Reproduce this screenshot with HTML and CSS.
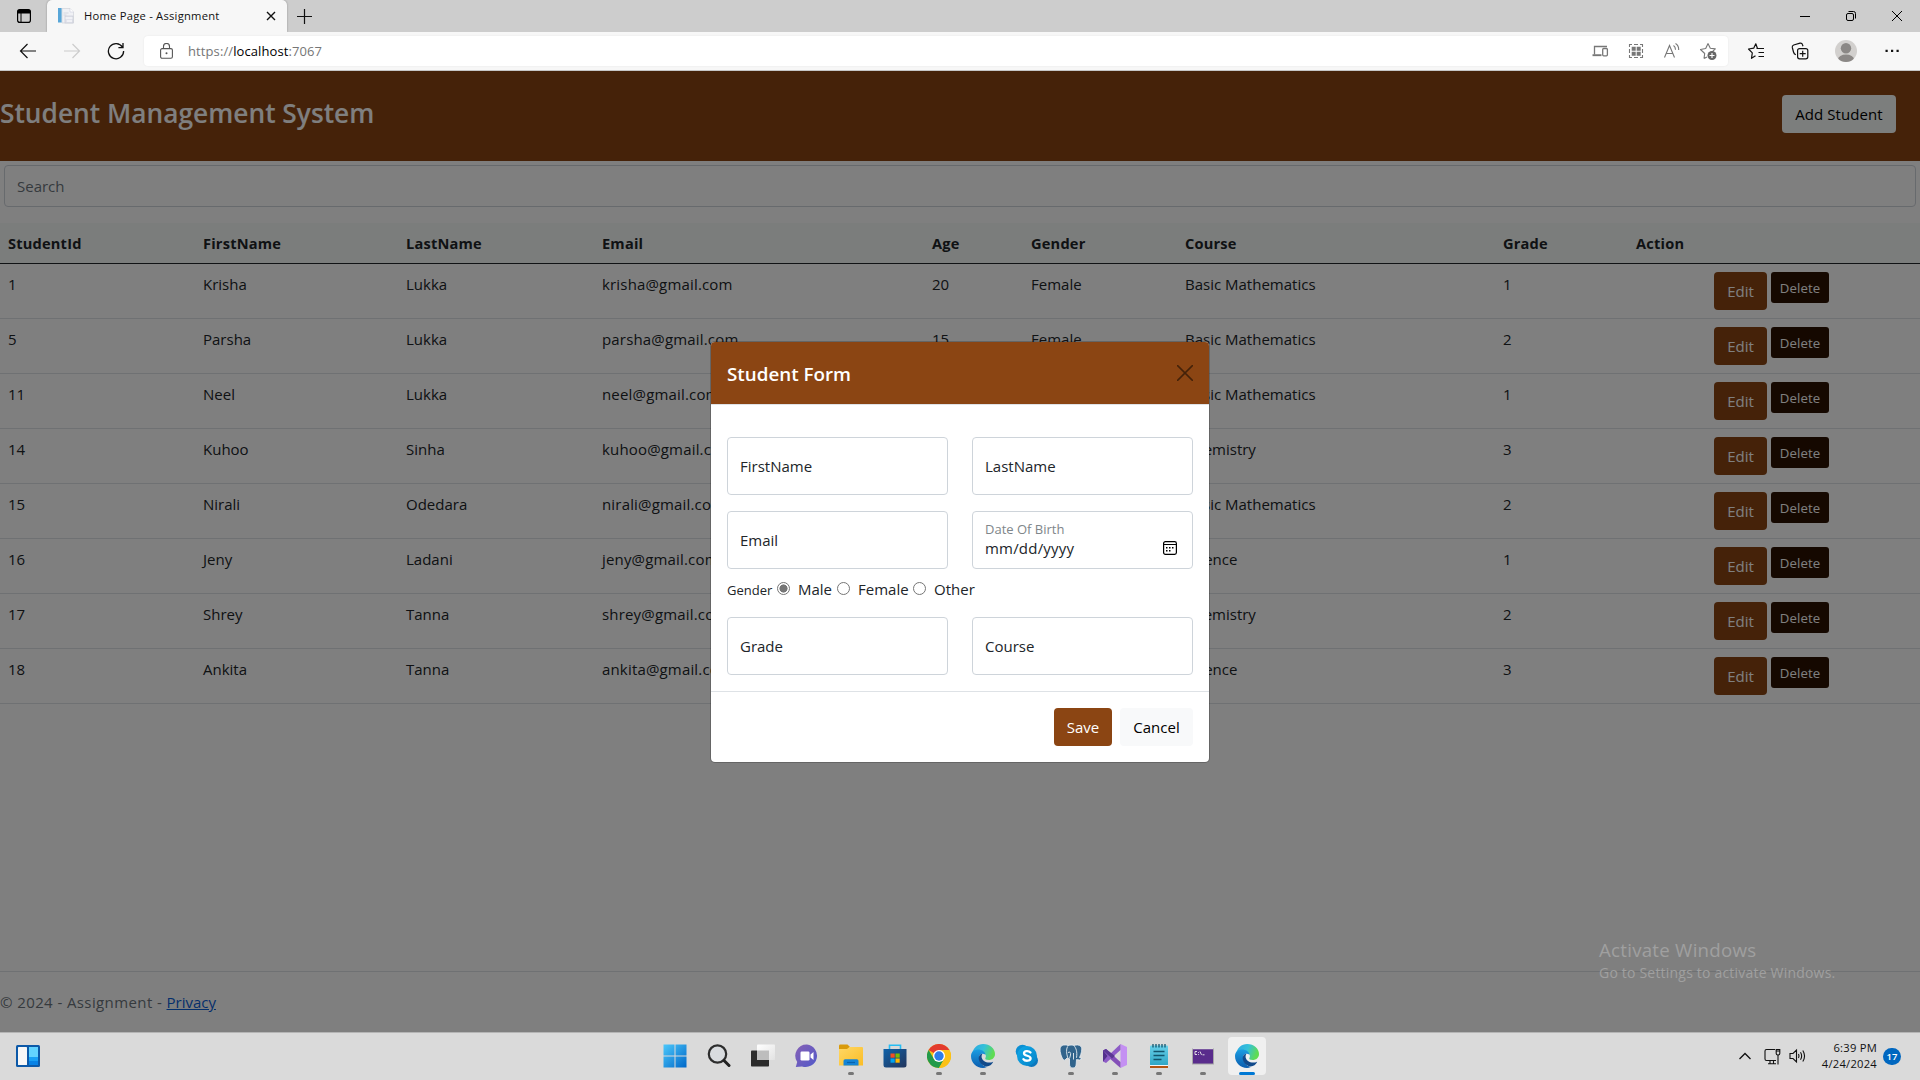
FILE: index.html
```html
<!DOCTYPE html>
<html lang="en">
<head>
<meta charset="utf-8">
<title>Home Page - Assignment</title>
<link rel="stylesheet" href="styles.css">
</head>
<body>
<svg width="0" height="0" class="defs" aria-hidden="true">
  <defs>
    <linearGradient id="win" x1="0" y1="0" x2="1" y2="1"><stop offset="0" stop-color="#4cc8fb"/><stop offset="1" stop-color="#0067c8"/></linearGradient>
    <linearGradient id="eg1" x1="0" y1="0" x2="1" y2=".3"><stop offset="0" stop-color="#2aa6e4"/><stop offset=".55" stop-color="#35c1d8"/><stop offset="1" stop-color="#5fdc52"/></linearGradient>
    <linearGradient id="eg2" x1="0" y1="0" x2="0" y2="1"><stop offset="0" stop-color="#1b9de2"/><stop offset="1" stop-color="#0b5cae"/></linearGradient>
    <linearGradient id="chat" x1="0" y1="0" x2="1" y2="1"><stop offset="0" stop-color="#8660b5"/><stop offset="1" stop-color="#5159c9"/></linearGradient>
    <linearGradient id="fold" x1="0" y1="0" x2="1" y2="1"><stop offset="0" stop-color="#ffd765"/><stop offset="1" stop-color="#fbbd25"/></linearGradient>
    <linearGradient id="store" x1="0" y1="0" x2="1" y2="1"><stop offset="0" stop-color="#0f62a9"/><stop offset="1" stop-color="#23355c"/></linearGradient>
    <linearGradient id="pad" x1="0" y1="0" x2="0" y2="1"><stop offset="0" stop-color="#67d0ea"/><stop offset="1" stop-color="#2fa5c4"/></linearGradient>
    <linearGradient id="sk" x1="0" y1="0" x2="1" y2="1"><stop offset="0" stop-color="#10a9e8"/><stop offset="1" stop-color="#0583c8"/></linearGradient>
    <linearGradient id="tv" x1="0" y1="0" x2="1" y2="1"><stop offset="0" stop-color="#fff"/><stop offset="1" stop-color="#e2e2e2"/></linearGradient>
    <symbol id="edge" viewBox="0 0 24 24">
      <path d="M1 10C2 4 6.500 0 12.200 0 19 0 24 4.700 24 10c0 3.900-3 6-6.300 6-2.700 0-4-1-3.300-2 1-1.600.5-3.600-1-5C10 6 4 6 1 10z" fill="url(#eg1)"/>
      <path d="M0 12c0-4.500 4-6.500 7.300-6.500 3.700 0 6.700 2.100 7.200 5.200-1-.8-2.300-1.200-3.600-1C8.500 10 7.500 12.600 8.300 15.500c1 3.800 4.200 7 7.500 7.400-1.300.7-2.500 1.100-3.800 1.100C5.400 24 0 18.600 0 12z" fill="url(#eg2)"/>
      <path d="M9.300 10.600C6 13.500 8 20 13.500 22c3.600 1.300 7-.7 8.700-4.300-2.100 1-6.200 1.600-9.200-.7-2.300-1.800-3.200-4.600-1.600-7.200-.8 0-1.500.3-2.100.8z" fill="#114a8b"/>
    </symbol>
  </defs>
</svg>

<div class="screen">
  <div class="tabstrip">
    <svg class="tab-actions" viewBox="0 0 14 14"><rect x=".6" y=".6" width="12.800" height="12.800" rx="2.200" fill="none" stroke="#000" stroke-width="1.200"/><path d="M.6 4.600V2.500Q.6.600 2.600.6h8.800q2 0 2 1.900v2.100z" fill="#000"/><path d="M4 4v9.500" stroke="#000" stroke-width="1"/></svg>
    <div class="tab">
      <svg class="favicon" viewBox="0 0 16 16"><path d="M4 .5h8l3.500 3.500v11H4z" fill="#f0f1f5" stroke="#d0d3da" stroke-width=".7"/><path d="M12 .5V4h3.500" fill="#fff" stroke="#ccd" stroke-width=".6"/><rect x="0" y="0" width="3.600" height="14.500" fill="#58a6d8"/><path d="M5.500 5h5M5.500 7h3" stroke="#d5d8e0"/><rect x="7" y="8" width="8" height="7" fill="#e2e3ec" stroke="#c5c8d4" stroke-width=".6"/><path d="M7.500 10h7M9 13h5" stroke="#fff"/></svg>
      <span class="tab-title">Home Page - Assignment</span>
      <svg class="tab-close" viewBox="0 0 10 10"><path d="M1 1l8 8M9 1L1 9" stroke="#111" stroke-width="1.400"/></svg>
    </div>
    <svg class="new-tab" viewBox="0 0 15 15"><path d="M7.500 0v15M0 7.500h15" stroke="#111" stroke-width="1.200"/></svg>
    <div class="window-controls">
      <svg viewBox="0 0 12 12"><path d="M1 6.500h10" stroke="#000"/></svg>
      <svg viewBox="0 0 12 12"><rect x="1.500" y="3.500" width="7" height="7" rx="1.500" fill="none" stroke="#000"/><path d="M3.500 1.500H8.500q2 0 2 2V8.500" fill="none" stroke="#000"/></svg>
      <svg viewBox="0 0 12 12"><path d="M1 1l10 10M11 1L1 11" stroke="#000"/></svg>
    </div>
  </div>

  <div class="toolbar">
    <div class="nav">
      <svg viewBox="0 0 18 18"><path d="M17 9H1.500M8.500 2L1.500 9l7 7" fill="none" stroke="#111" stroke-width="1.200"/></svg>
      <svg viewBox="0 0 18 18"><path d="M1 9h15.500M9.500 2l7 7-7 7" fill="none" stroke="#ccc" stroke-width="1.200"/></svg>
      <svg viewBox="0 0 18 18"><path d="M15.500 5.200A7.600 7.600 0 1 0 16.600 9M16 1v4.600h-4.600" fill="none" stroke="#111" stroke-width="1.300"/></svg>
    </div>
    <div class="address">
      <svg class="lock" viewBox="0 0 13 16"><rect x=".6" y="5.600" width="11.800" height="9.600" rx="1.500" fill="none" stroke="#555" stroke-width="1.100"/><path d="M3.500 5.500V3.500a3 3 0 0 1 6 0v2" fill="none" stroke="#555" stroke-width="1.100"/><circle cx="6.500" cy="10.200" r="1" fill="#555"/></svg>
      <span class="url">https://<b>localhost</b>:7067</span>
      <div class="address-icons">
        <svg viewBox="0 0 18 18"><path d="M3.500 12.500V4.500h12.500" fill="none" stroke="#777" stroke-width="1.300"/><path d="M1.500 13.200h9" stroke="#777" stroke-width="1.900"/><rect x="11.700" y="6.500" width="4.700" height="7.300" rx="1" fill="none" stroke="#777" stroke-width="1.300"/></svg>
        <svg viewBox="0 0 18 18"><path d="M2.500 5V2.500H5M13 2.500h2.500V5M15.500 13v2.500H13M5 15.500H2.500V13M7 2.500h4M7 15.500h4M2.500 7v4M15.500 7v4" fill="none" stroke="#777" stroke-width="1.100"/><path d="M4.700 4.700h4v4h-4zM9.700 4.700h4v4h-4zM4.700 9.700h4v4h-4zM9.700 9.700h4v4h-4z" fill="#777"/></svg>
        <svg viewBox="0 0 18 18"><path d="M1.500 15.500L6.500 3.500l5 12M3.300 11.500h6.400M10.500 3.500c1.500 1 2 2.500 2 4.200M12.500 1.500c2.200 1.300 3.300 3.600 3.200 6.500" fill="none" stroke="#777" stroke-width="1.100"/></svg>
        <svg viewBox="0 0 18 18"><path d="M9 1.500l2.300 4.700 5 .7-3.600 3.500M5 16.500l.7-5-4.200-4 5.200-1L9 1.500M5 16.500L8 14.900" fill="none" stroke="#777" stroke-width="1.100" stroke-linejoin="round"/><circle cx="13" cy="13.500" r="4.500" fill="#666"/><path d="M13 11v5M10.500 13.500h5" stroke="#fff" stroke-width="1.100"/></svg>
      </div>
    </div>
    <div class="browser-actions">
      <svg viewBox="0 0 18 18"><path d="M10.500 6.200h-.1L8.800 1.800 6.700 6.200l-5.200.8 3.800 3.800L4.500 16.300l4-2.500M9.500 6.500H17M11.500 10.500H17M11.500 14.500H17" fill="none" stroke="#111" stroke-width="1.200" stroke-linejoin="round"/></svg>
      <svg viewBox="0 0 18 18"><rect x="6.600" y="6.600" width="10.200" height="10.200" rx="2" fill="none" stroke="#111" stroke-width="1.200"/><path d="M11.700 8.700v6M8.700 11.700h6M4.800 12.800Q3 12 2.500 10L1.300 5.500Q.9 3.700 2.700 3L9 1.200q2-.3 2.500 1.500l.5 1.500" fill="none" stroke="#111" stroke-width="1.200"/></svg>
      <svg class="avatar" viewBox="0 0 22 22"><clipPath id="av"><circle cx="11" cy="11" r="11"/></clipPath><g clip-path="url(#av)"><path d="M0 0h22v22H0z" fill="#d2d0ce"/><circle cx="11" cy="8.300" r="5.200" fill="#8b8886"/><ellipse cx="11" cy="19.500" rx="8" ry="5" fill="#8b8886"/></g></svg>
      <svg viewBox="0 0 18 18"><path d="M2.500 7.700h2.200v2.200H2.500zM8 7.700h2.200v2.200H8zM13.500 7.700h2.200v2.200h-2.200z" fill="#111"/></svg>
    </div>
  </div>

  <div class="viewport">
    <header class="site-header">
      <h3>Student Management System</h3>
      <button class="btn btn-light add">Add Student</button>
    </header>
    <div class="search">Search</div>
    <table class="students">
      <colgroup><col class="c-id"><col class="c-first"><col class="c-last"><col class="c-email"><col class="c-age"><col class="c-gender"><col class="c-course"><col class="c-grade"><col class="c-action"><col></colgroup>
      <thead><tr><th>StudentId</th><th>FirstName</th><th>LastName</th><th>Email</th><th>Age</th><th>Gender</th><th>Course</th><th>Grade</th><th>Action</th><th></th></tr></thead>
      <tbody>
        <tr><td>1</td><td>Krisha</td><td>Lukka</td><td>krisha@gmail.com</td><td>20</td><td>Female</td><td>Basic Mathematics</td><td>1</td><td></td><td><div class="row-actions"><button class="btn btn-brown">Edit</button><button class="btn btn-del">Delete</button></div></td></tr>
        <tr><td>5</td><td>Parsha</td><td>Lukka</td><td>parsha@gmail.com</td><td>15</td><td>Female</td><td>Basic Mathematics</td><td>2</td><td></td><td><div class="row-actions"><button class="btn btn-brown">Edit</button><button class="btn btn-del">Delete</button></div></td></tr>
        <tr><td>11</td><td>Neel</td><td>Lukka</td><td>neel@gmail.com</td><td></td><td></td><td>Basic Mathematics</td><td>1</td><td></td><td><div class="row-actions"><button class="btn btn-brown">Edit</button><button class="btn btn-del">Delete</button></div></td></tr>
        <tr><td>14</td><td>Kuhoo</td><td>Sinha</td><td>kuhoo@gmail.com</td><td></td><td></td><td>Chemistry</td><td>3</td><td></td><td><div class="row-actions"><button class="btn btn-brown">Edit</button><button class="btn btn-del">Delete</button></div></td></tr>
        <tr><td>15</td><td>Nirali</td><td>Odedara</td><td>nirali@gmail.com</td><td></td><td></td><td>Basic Mathematics</td><td>2</td><td></td><td><div class="row-actions"><button class="btn btn-brown">Edit</button><button class="btn btn-del">Delete</button></div></td></tr>
        <tr><td>16</td><td>Jeny</td><td>Ladani</td><td>jeny@gmail.com</td><td></td><td></td><td>Science</td><td>1</td><td></td><td><div class="row-actions"><button class="btn btn-brown">Edit</button><button class="btn btn-del">Delete</button></div></td></tr>
        <tr><td>17</td><td>Shrey</td><td>Tanna</td><td>shrey@gmail.com</td><td></td><td></td><td>Chemistry</td><td>2</td><td></td><td><div class="row-actions"><button class="btn btn-brown">Edit</button><button class="btn btn-del">Delete</button></div></td></tr>
        <tr><td>18</td><td>Ankita</td><td>Tanna</td><td>ankita@gmail.com</td><td></td><td></td><td>Science</td><td>3</td><td></td><td><div class="row-actions"><button class="btn btn-brown">Edit</button><button class="btn btn-del">Delete</button></div></td></tr>
      </tbody>
    </table>
    <footer class="site-footer"><span>© 2024 - Assignment - </span><a href="#">Privacy</a></footer>

    <div class="backdrop">
      <div class="modal">
        <div class="modal-header">
          <h5>Student Form</h5>
          <svg viewBox="0 0 16 16"><path d="M.6.6l14.800 14.800M15.400.6L.6 15.400" stroke="#000" stroke-width="1.500" stroke-linecap="round"/></svg>
        </div>
        <div class="modal-body">
          <div class="fields">
            <div class="field">FirstName</div>
            <div class="field">LastName</div>
            <div class="field">Email</div>
            <div class="field date">
              <div><small>Date Of Birth</small><span class="mask">mm/dd/yyyy</span></div>
              <svg viewBox="0 0 14 14"><rect x=".6" y=".6" width="12.800" height="12.800" rx="1.800" fill="none" stroke="#000" stroke-width="1.200"/><path d="M.5 3.500h13" stroke="#000"/><path d="M6 6h1.500v1.500H6zM9 6h1.500v1.500H9zM3 6h1.500v1.500H3zM3 9h1.500v1.500H3zM6 9h1.500v1.500H6z" fill="#000"/></svg>
            </div>
          </div>
          <div class="gender">
            <small>Gender</small>
            <i class="radio on"></i><span class="male">Male</span>
            <i class="radio"></i><span class="female">Female</span>
            <i class="radio"></i><span>Other</span>
          </div>
          <div class="fields">
            <div class="field">Grade</div>
            <div class="field">Course</div>
          </div>
        </div>
        <div class="modal-footer">
          <button class="btn btn-brown save">Save</button>
          <button class="btn btn-light cancel">Cancel</button>
        </div>
      </div>
    </div>
    <div class="watermark"><p class="wm-title">Activate Windows</p><p class="wm-text">Go to Settings to activate Windows.</p></div>
  </div>

  <div class="taskbar">
    <svg class="widgets" viewBox="0 0 24 22"><rect width="24" height="22" rx="1.500" fill="#0c59a8"/><rect x="2" y="2" width="9" height="18" rx=".6" fill="#f7f7f7"/><path d="M13 2h9v10h-9z" fill="#62d3ff"/><path d="M13 12h9v4h-9z" fill="#18a0f5"/><path d="M13 16h9v4h-9z" fill="#0782e6"/></svg>
    <div class="apps">
      <div class="app"><svg viewBox="0 0 24 24"><path d="M.5.500h11v11H.5zM12.500.500h11v11h-11zM.5 12.500h11v11H.5zM12.500 12.500h11v11h-11z" fill="url(#win)"/></svg></div>
      <div class="app"><svg viewBox="0 0 24 24"><circle cx="10.500" cy="10" r="8.700" fill="#d9dcdf" stroke="#2d2d2d" stroke-width="2.200"/><path d="M17 16.500l5 5" stroke="#222" stroke-width="3" stroke-linecap="round"/></svg></div>
      <div class="app"><svg viewBox="0 0 24 24"><rect x="0" y="6.500" width="18" height="16" rx=".8" fill="#2b2b2b"/><rect x="6" y=".5" width="18" height="15.500" rx=".8" fill="url(#tv)"/><path d="M6 6.500h12V16H6z" fill="#bdbdbd"/></svg></div>
      <div class="app"><svg viewBox="0 0 24 24"><path d="M12 .5A11.300 11.300 0 1 1 7 22.400L.8 23l1.400-5A11.300 11.300 0 0 1 12 .5z" fill="url(#chat)"/><rect x="5.500" y="7.500" width="9" height="9" rx="1.200" fill="#fff"/><path d="M15.500 10.500l3-2.500v8l-3-2.500z" fill="#fff"/></svg></div>
      <div class="app run"><svg viewBox="0 0 24 24"><path d="M0 5V1.800Q0 .5 1.300.5H8.500L11 3l-3 3z" fill="#d99a0b"/><path d="M0 5h8l2.500-2H23q1 0 1 1v17.500H0z" fill="url(#fold)"/><path d="M4.500 21.500V17q0-1.700 1.700-1.700h11.600q1.700 0 1.700 1.700v4.500z" fill="#1484d6"/><path d="M8 18.500h8" stroke="#0763ad" stroke-width="1.200"/></svg></div>
      <div class="app"><svg viewBox="0 0 24 24"><path d="M6.500 5.500V1.200h11v4.300" fill="none" stroke="#26bdf3" stroke-width="1.600"/><path d="M.5 5h23v16q0 2.500-2.500 2.500H3Q.5 23.500.5 21z" fill="url(#store)"/><path d="M7.500 9.500h4.200v4.200H7.500z" fill="#f25022"/><path d="M12.500 9.500h4.200v4.200h-4.200z" fill="#7fba00"/><path d="M7.500 14.500h4.200v4.200H7.500z" fill="#00a4ef"/><path d="M12.500 14.500h4.200v4.200h-4.200z" fill="#ffb900"/></svg></div>
      <div class="app run"><svg viewBox="0 0 24 24"><circle cx="12" cy="12" r="12" fill="#fbc116"/><path d="M12 12L1.600 6A12 12 0 0 1 22.400 6z" fill="#e33b2e"/><path d="M1.600 6A12 12 0 0 0 12 24l5.200-9-5.200 2.500L7 15z" fill="#229a4a"/><path d="M12 6h10.400A12 12 0 0 1 12 24l5.200-9z" fill="#fbc116"/><circle cx="12" cy="12" r="6" fill="#fff"/><circle cx="12" cy="12" r="4.700" fill="#2d7de9"/></svg></div>
      <div class="app run"><svg><use href="#edge"/></svg></div>
      <div class="app"><svg viewBox="0 0 24 24"><circle cx="7.500" cy="7.500" r="6.800" fill="#0c8fd3"/><circle cx="16.500" cy="16.500" r="6.500" fill="#0c77bd"/><circle cx="12" cy="12" r="10" fill="url(#sk)"/><path d="M15.500 8.500C14 6.800 9 6.500 9 9.300c0 3.200 6.600 1.700 6.600 5 0 3.200-5.800 3-7.200.8" fill="none" stroke="#fff" stroke-width="2.300" stroke-linecap="round"/></svg></div>
      <div class="app run"><svg viewBox="0 0 24 24"><path d="M6 1C1 .5.500 5 1.500 9c1 4.500 3 8 4.500 7l2.500-2.500 2 1.500v5c0 3 1.500 4 3.500 4s3-1.500 3.200-4l.3-4.500 3 .5 2.300-1.500-2.300-1c2-4 3-9 1.500-11-2-2-5-1.800-7-1-2-.7-4-.7-6 .3C8 1 7 1 6 1z" fill="#31648c" stroke="#e8eef2" stroke-width=".8"/><path d="M8.500 2.500C7 6 7.500 9 8.500 13M15 1.800c2 2 3.500 6 2.500 12M9 8.500c2-1 3 0 2.500 2.500l-1 3.500M14.500 15.500V9" fill="none" stroke="#e8eef2" stroke-width=".9"/></svg></div>
      <div class="app run"><svg viewBox="0 0 24 24"><path d="M17.500 0L24 3v18l-6.500 3z" fill="#c490f2"/><path d="M0 6.500L3 5l14.500 13v6L5 13z" fill="#8450b8"/><path d="M0 6.500V17.500l3 1.500L17.500 6V0L6 11 3 5z" fill="#8d5cc6"/><path d="M0 6.500L4.500 12 0 17.500z" fill="#53308c"/><path d="M3 5l9 7-3 2.500L0 6.500z" fill="#5b3893"/></svg></div>
      <div class="app run"><svg viewBox="0 0 24 24"><rect x="3" y="1.500" width="18" height="20" rx="1" fill="url(#pad)"/><path d="M6 0v3.500M9 0v3.500M12 0v3.500M15 0v3.500M18 0v3.500M6.500 7.500h11M6.500 11.500h11M6.500 15.500h8" stroke="#12546d" stroke-width="1.300"/><path d="M3 21.500h18" stroke="#f5f5f5"/><path d="M3 23h18" stroke="#b35412" stroke-width="2"/></svg></div>
      <div class="app run"><svg viewBox="0 0 24 24"><rect x="1.500" y="4.500" width="21" height="15.500" fill="#592c8c" stroke="#a7a7a7"/><path d="M1.500 4.500h21" stroke="#ddd" stroke-width="1.500"/><path d="M6 7.500H4v3h2M7.500 8v.8M7.500 10v.8M9 7.500l1.500 3.300M11.500 10.800h2" fill="none" stroke="#eee" stroke-width=".9"/></svg></div>
      <div class="app run active"><svg><use href="#edge"/></svg></div>
    </div>
    <div class="tray">
      <svg class="chevron" viewBox="0 0 14 8"><path d="M1.500 7L7 1.500 12.500 7" fill="none" stroke="#111" stroke-width="1.300"/></svg>
      <svg class="net" viewBox="0 0 17 17"><path d="M11 1.500H2.500q-1.500 0-1.500 1.500v8q0 1.500 1.500 1.500h9.500M6 12.500v3M9.500 12.500v3M4 15.800h8M14 7v9.500" fill="none" stroke="#111" stroke-width="1.100"/><path d="M12.200 1.500h3.600v4q0 1.500-1.800 1.500t-1.800-1.500zM12 3h4" fill="none" stroke="#111" stroke-width="1.100"/></svg>
      <svg class="vol" viewBox="0 0 18 16"><path d="M1 5.500h3L7.500 2v12L4 10.500H1zM9.500 6q1 2 0 4M11.500 4.200q2.300 3.800 0 7.600M13.800 2.500q3.500 5.500 0 11" fill="none" stroke="#111" stroke-width="1.100"/></svg>
      <div class="clock"><span class="time">6:39 PM</span><span class="day">4/24/2024</span></div>
      <div class="badge">17</div>
    </div>
  </div>
</div>
</body>
</html>
```
FILE: styles.css
```css
* { box-sizing: border-box; }
body { margin: 0; font-family: "Open Sans", "Noto Sans", sans-serif; font-size: 15px; line-height: 24px; color: #212529; }
h3, h5, p { margin: 0; }
svg { display: block; flex: none; }
.defs { position: absolute; }
.screen { width: 1920px; height: 1080px; overflow: hidden; display: flex; flex-direction: column; }

/* Browser tab strip */
.tabstrip { height: 32px; flex: none; background: #cdcdcd; display: flex; align-items: center; padding-left: 17px; }
.tab-actions { width: 14px; height: 14px; margin-right: 16px; }
.tab { width: 240px; height: 32px; background: #f7f7f7; border-radius: 5px 5px 0 0; box-shadow: 0 0 2px rgba(0,0,0,.35); display: flex; align-items: center; padding: 0 11px 0 11px; clip-path: inset(0 -3px 0 -3px); }
.favicon { width: 16px; height: 16px; margin-right: 10px; }
.tab-title { font-size: 11.200px; letter-spacing: .24px; flex: 1; color: #111; white-space: nowrap; margin-top: -1px; }
.tab-close { width: 10px; height: 10px; }
.new-tab { width: 15px; height: 15px; margin-left: 10px; }
.window-controls { margin-left: auto; display: flex; gap: 34px; padding-right: 17px; }
.window-controls svg { width: 12px; height: 12px; }

/* Browser toolbar */
.toolbar { height: 39px; flex: none; background: #f7f7f7; border-bottom: 1px solid #c6c6c6; display: flex; align-items: center; padding: 0 19px; }
.nav { display: flex; gap: 26px; width: 125px; }
.nav svg, .address-icons svg, .browser-actions svg { width: 18px; height: 18px; }
.address { width: 1584px; height: 30px; background: #fff; border-radius: 4px; box-shadow: 0 0 2px rgba(0,0,0,.08); display: flex; align-items: center; padding: 0 11px 0 16px; }
.lock { width: 13px; height: 16px; margin-right: 15px; }
.url { font-size: 13px; letter-spacing: .1px; color: #767676; }
.url b { font-weight: 400; color: #000; }
.address-icons { margin-left: auto; display: flex; gap: 18px; }
.browser-actions { display: flex; align-items: center; gap: 26px; margin-left: 19px; }
.browser-actions .avatar { width: 22px; height: 22px; }

/* Page */
.viewport { position: relative; height: 961px; flex: none; background: #fff; overflow: hidden; display: flex; flex-direction: column; }
.site-header { height: 90px; flex: none; background: #8b4513; display: flex; justify-content: space-between; padding: 24px 24px 0 0; }
.site-header h3 { font-size: 26.300px; line-height: 36px; font-weight: 600; color: #fff; }
.btn { font-family: inherit; font-size: 15px; line-height: 24px; font-weight: 400; height: 38px; border: 0; border-radius: 4px; padding: 0; color: #fff; white-space: nowrap; }
.btn-light { background: #f8f9fa; color: #000; }
.btn-brown { background: #8b4513; }
.add { width: 114px; background: #f8fcfa; letter-spacing: .08px; }
.search { height: 42px; flex: none; margin: 4px; border: 1px solid #ced4da; border-radius: 4px; padding: 8px 12px; color: #6c757d; }
.students { margin-top: 12px; width: 1920px; table-layout: fixed; border-collapse: collapse; }
.c-id { width: 195px; } .c-first { width: 203px; } .c-last { width: 196px; } .c-email { width: 330px; } .c-age { width: 99px; }
.c-gender { width: 154px; } .c-course { width: 318px; } .c-grade { width: 133px; } .c-action { width: 78px; }
.students th { height: 40px; padding: 1px 8px 0; text-align: left; font-weight: 700; font-size: 14.600px; letter-spacing: .2px; background: #f6fbf8; border-bottom: 1px solid #212529; white-space: nowrap; }
.students td { height: 55px; padding: 8px; vertical-align: top; border-bottom: 1px solid #dee2e6; white-space: nowrap; }
.students td:nth-child(4) { letter-spacing: .17px; }
.row-actions { display: flex; gap: 4px; height: 38px; }
.row-actions .btn-brown { width: 53px; }
.btn-del { width: 58px; height: 31px; padding-top: 1px; font-size: 13.200px; letter-spacing: .1px; background: #2b1100; border-radius: 3px; }
.site-footer { margin-top: auto; height: 61px; border-top: 1px solid #dee2e6; padding-top: 18px; color: #6c757d; }
.site-footer span { letter-spacing: .4px; white-space: pre; }
.site-footer a { color: #0b5ed7; }

/* Modal */
.backdrop { position: absolute; inset: 0; background: rgba(0,0,0,.5); display: flex; justify-content: center; align-items: flex-start; padding-top: 270px; }
.modal { width: 500px; background: #fff; background-clip: padding-box; border: 1px solid rgba(0,0,0,.2); border-radius: 5px; overflow: hidden; }
.modal-header { height: 63px; background: #8b4513; background-clip: padding-box; border-bottom: 1px solid #dee2e6; display: flex; align-items: center; justify-content: space-between; padding: 0 16px; }
.modal-header h5 { font-size: 18.800px; font-weight: 600; color: #fff; padding-top: 2px; }
.modal-header svg { width: 16px; height: 16px; opacity: .5; }
.modal-body { padding: 32px 16px 16px; }
.fields { display: grid; grid-template-columns: 1fr 1fr; gap: 16px 24px; }
.field { height: 58px; border: 1px solid #ced4da; border-radius: 4px; padding: 0 15px 0 12px; display: flex; align-items: center; justify-content: space-between; }
.date small { display: block; font-size: 13px; line-height: 18px; color: #80868a; }
.date .mask { display: block; line-height: 20px; letter-spacing: .2px; }
.date div { padding-bottom: 2px; }
.date svg { width: 14px; height: 14px; margin-top: 15px; }
.gender { display: flex; align-items: center; height: 24px; margin: 8px 0 16px; }
.gender small { font-size: 13px; width: 50px; padding-top: 1px; }
.radio { width: 13px; height: 13px; border: 1px solid #767676; border-radius: 50%; margin: -1px 8px 0 0; }
.radio.on { background: radial-gradient(circle, #767676 3.800px, #fff 4.300px); }
.male { width: 39px; } .female { width: 55px; }
.modal-footer { height: 71px; border-top: 1px solid #dee2e6; display: flex; justify-content: flex-end; gap: 8px; padding: 16px; }
.save { width: 58px; } .cancel { width: 73px; }

.watermark { position: absolute; left: 1599px; top: 865px; color: #a0a0a0; white-space: nowrap; }
.wm-title { font-size: 18.700px; line-height: 28px; letter-spacing: .25px; }
.wm-text { font-size: 14px; line-height: 18px; letter-spacing: .2px; }

/* Taskbar */
.taskbar { height: 48px; flex: none; background: #dadada; border-top: 1px solid #b5b5b5; display: flex; align-items: center; padding: 0 19px 1px 16px; }
.widgets { width: 24px; height: 22px; }
.apps { display: flex; margin-left: 613px; }
.app { position: relative; width: 44px; height: 38px; display: flex; align-items: center; justify-content: center; }
.app svg { width: 24px; height: 24px; }
.run::after { content: ""; position: absolute; bottom: 0; left: 19px; width: 6px; height: 3px; border-radius: 2px; background: #777; }
.active { width: 38px; margin-left: 3px; background: #f0f0f0; border-radius: 4px; }
.active::after { left: 11px; width: 16px; background: #0078d4; }
.tray { margin-left: auto; display: flex; align-items: center; }
.chevron { width: 14px; height: 8px; margin-right: 12px; }
.net { width: 17px; height: 17px; margin-right: 8px; }
.vol { width: 18px; height: 16px; margin-right: 14px; }
.clock { width: 56px; font-size: 11.200px; letter-spacing: .25px; line-height: 16px; text-align: right; color: #111; white-space: nowrap; }
.clock span { display: block; }
.badge { width: 18px; height: 17px; border-radius: 9px; background: #0067c0; color: #fff; font-size: 9.500px; font-weight: 600; line-height: 17px; text-align: center; margin-left: 6px; }
```
